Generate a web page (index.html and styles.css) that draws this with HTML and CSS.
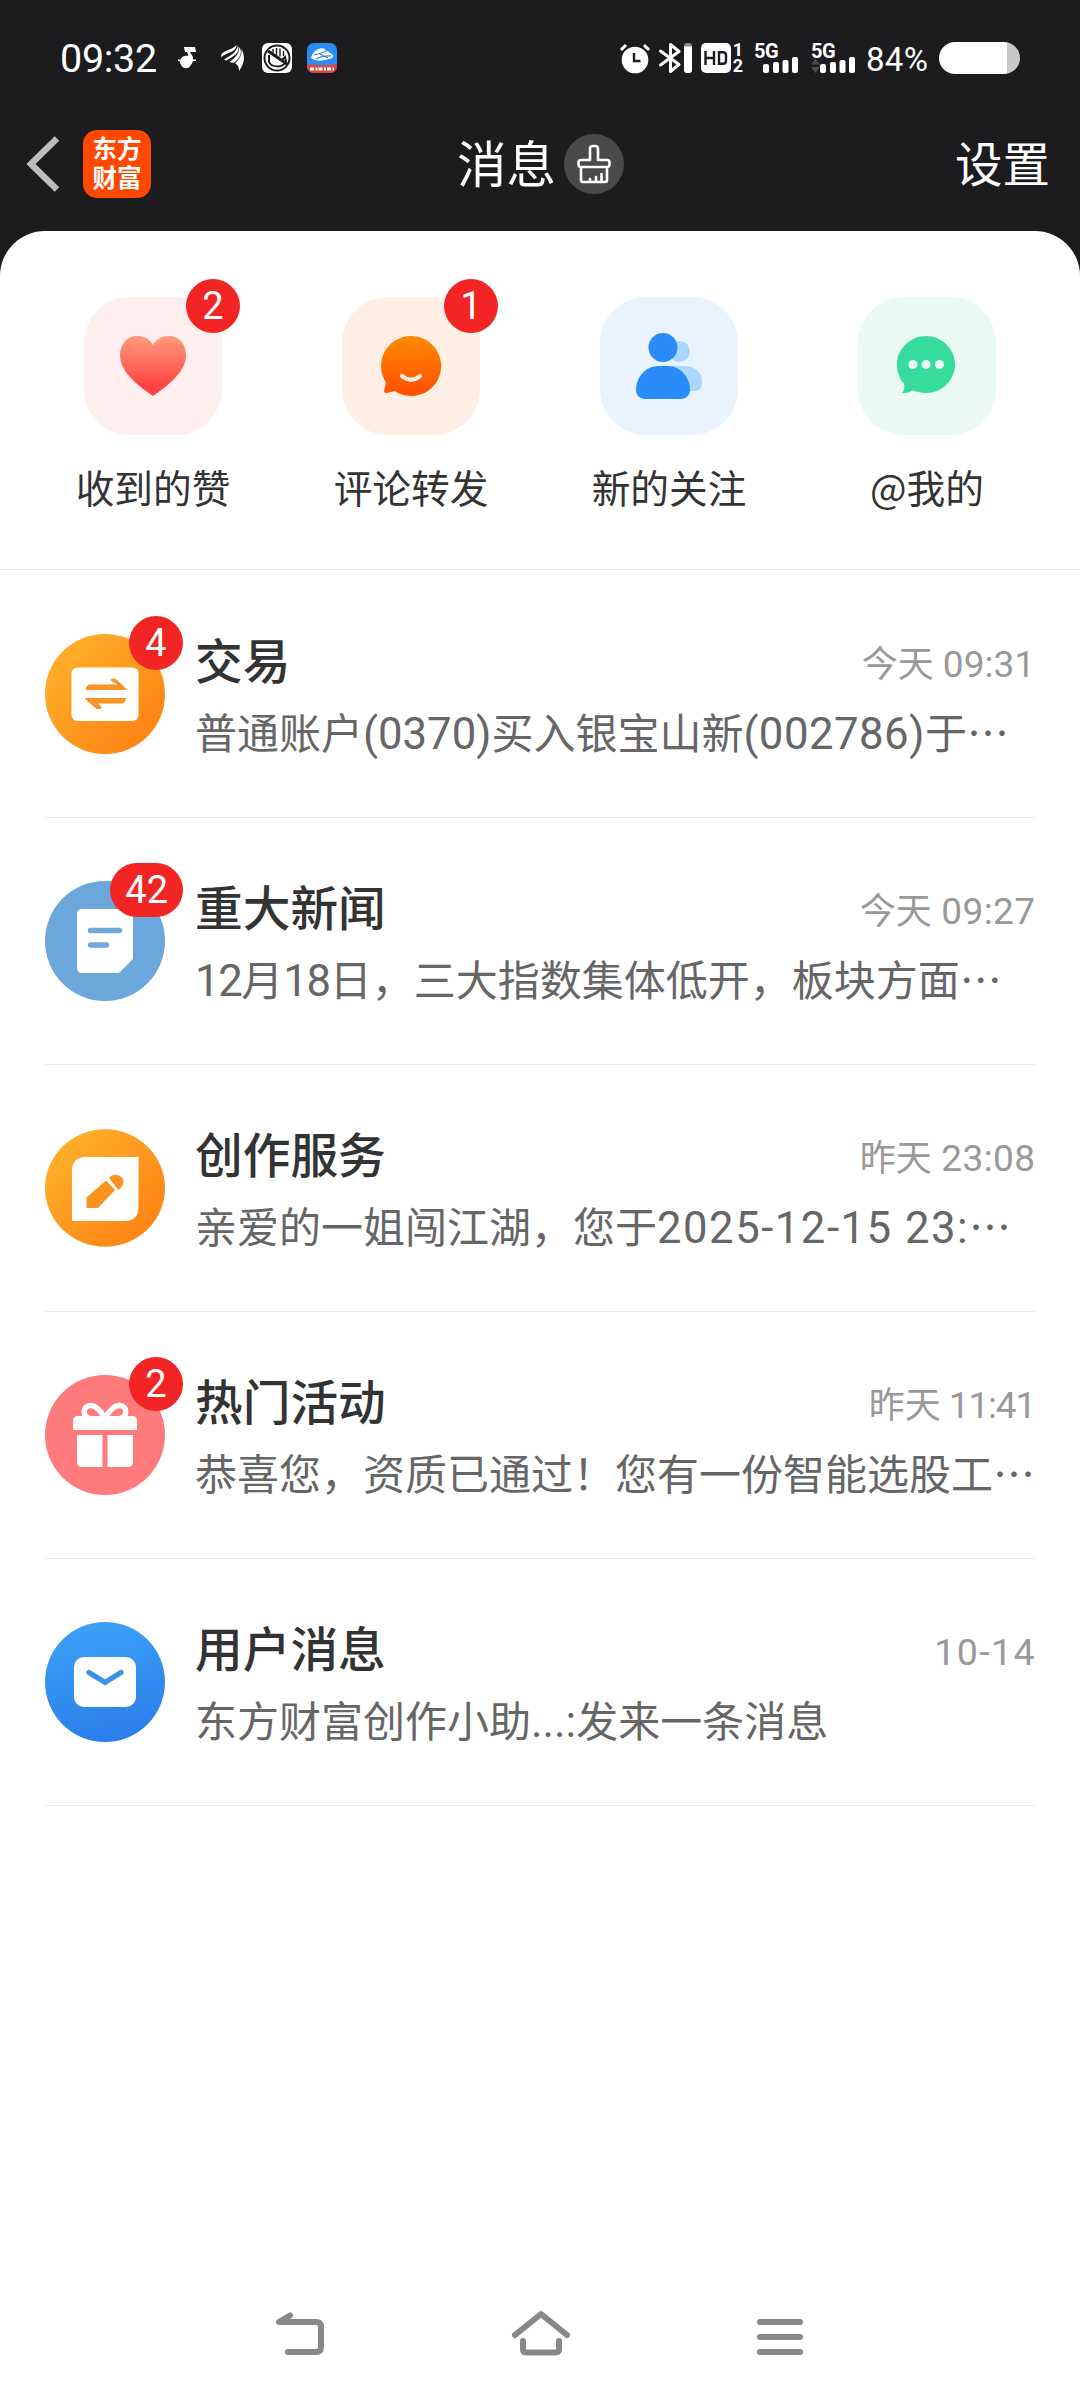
FILE: index.html
```html
<!DOCTYPE html>
<html lang="zh-CN">
<head>
<meta charset="utf-8">
<title>消息</title>
<link rel="stylesheet" href="styles.css">
</head>
<body>
<div class="screen">
  <header class="top">
    <div class="status">
      <span class="clock">09:32</span>
      <svg class="s-note" width="20" height="22" viewBox="0 0 20 22" fill="#fff"><path d="M7 0h11l1 5h-6l3 5v2.500h3v1.500h-3c-.8 3-3 5-4 6.500q-3 1.500-6 0c-1.500-1.500-3-4-3.500-6.500H1v-1.500h2.500c.5-2 2.500-3.500 5-3.800h3L10 5H8z"/></svg>
      <svg class="s-wing" width="23" height="26" viewBox="0 0 23 26" fill="#fff"><path d="M0 11C1 5 10 6 15.500 0c0 7-8 7-15.500 12z"/><path d="M3 14.500C10 10 15 8 17 .5c2.500 7-4 11-12 15z"/><path d="M8.500 17C14 13 18 9 18.500 2c3.500 6 0 12-6 16z"/><path d="M14 18.500C19 14 21 9 20.500 4c4 7 3 15-2.500 22 0-4-1-6-4-7.500z"/></svg>
      <svg class="s-hand" width="30" height="30" viewBox="0 0 30 30"><rect width="30" height="30" rx="6" fill="#fff"/><circle cx="15" cy="15" r="12.500" fill="none" stroke="#1c1c1e" stroke-width="2"/><path d="M7 12v7c2 5 14 7 17-1l-1-4-4 4" fill="none" stroke="#1c1c1e" stroke-width="2"/><path d="M11 6v6M14.500 5v8M18 5.500v8M21.500 8v5" stroke="#1c1c1e" stroke-width="1.400"/><path d="M6 8l19 13" stroke="#1c1c1e" stroke-width="3"/></svg>
      <svg class="s-train" width="30" height="30" viewBox="0 0 30 30"><defs><clipPath id="tc"><rect width="30" height="30" rx="7"/></clipPath></defs><g clip-path="url(#tc)"><path fill="#2a8cf4" d="M0 0h30v30H0z"/><path fill="#e0443a" d="M0 21q15 2.500 30 0v9H0z"/><path d="M4 15q2-9 12-10l10 7q1 3-4 4-12 4-18-1z" fill="#fff"/><path d="M7 12q6-1 14-5M9 16q7-4 16-3M13 11l8 4" stroke="#2a8cf4" stroke-width="1.200" fill="none"/><path d="M3 26h24" stroke="#fff" stroke-width="3" stroke-dasharray="4 1.500 2 1"/></g></svg>
      <span class="spring"></span>
      <svg class="s-alarm" width="30" height="30" viewBox="0 0 30 30"><circle cx="15" cy="17" r="13.300" fill="#fff"/><path d="M1 7l5-5M29 7l-5-5" stroke="#fff" stroke-width="3"/><path d="M14 10v8h6.500" fill="none" stroke="#1c1c1e" stroke-width="2.400"/></svg>
      <svg class="s-bt" width="34" height="30" viewBox="0 0 34 30"><path d="M1.500 8L20 21.500l-8.500 7v-27l8.500 7L1.500 22" fill="none" stroke="#fff" stroke-width="3" stroke-linejoin="round" stroke-linecap="round"/><rect x="25" y="0" width="8" height="30" rx="3" fill="#8a8a8c"/><path d="M25 3.500h8V27q0 3-3 3h-2q-3 0-3-3z" fill="#fff"/></svg>
      <svg class="s-hd" width="30" height="30" viewBox="0 0 30 30"><rect width="30" height="30" rx="5" fill="#fff"/><path d="M4.500 8v14M13 8v14M4.500 15H13M18 9.200h4q3 0 3 3v5.600q0 3-3 3h-4z" fill="none" stroke="#1c1c1e" stroke-width="2.400"/></svg>
      <span class="sims"><span>1</span><span>2</span></span>
      <svg class="s-sig" width="46" height="30" viewBox="0 0 46 30" fill="#fff"><text x="0" y="14.500" class="net">5G</text><rect x="9" y="21" width="6" height="9" rx="2"/><rect x="19" y="19" width="6" height="11" rx="2"/><rect x="28.500" y="17" width="6" height="13" rx="2"/><rect x="38" y="14" width="6" height="16" rx="2"/></svg>
      <svg class="s-sig2" width="46" height="30" viewBox="0 0 46 30" fill="#fff"><text x="0" y="14.500" class="net">5G</text><path d="M0 21.500l4.500-6 4.500 6zM0 24l4.500 6 4.500-6z" fill="#4a4a4c"/><rect x="9" y="21" width="6" height="9" rx="2"/><rect x="19" y="19" width="6" height="11" rx="2"/><rect x="28.500" y="17" width="6" height="13" rx="2"/><rect x="38" y="14" width="6" height="16" rx="2"/></svg>
      <span class="percent">84%</span>
      <span class="battery"></span>
    </div>
    <div class="titlebar">
      <div class="side">
        <svg class="back" width="34" height="56" viewBox="0 0 34 56"><path d="M31 2.500L5 28l26 25.500" fill="none" stroke="#bdbdbd" stroke-width="6.500"/></svg>
        <div class="logo">东方<br>财富</div>
      </div>
      <div class="heading">
        <h1>消息</h1>
        <span class="brush"><svg width="34" height="40" viewBox="0 0 34 40" fill="none" stroke="#fff" stroke-width="2.600" stroke-linejoin="round" stroke-linecap="round"><path d="M13 16V5q0-3 3-3h2q3 0 3 3v11h9q2.500 0 2.500 2.500v2q0 2.500-2.500 2.500H4q-2.500 0-2.500-2.500v-2q0-2.500 2.500-2.500zM4 23v13q0 2 2 2h22q2 0 2-2V23M13 37v-2M19 37v-4M24.500 37v-7"/></svg></span>
      </div>
      <div class="settings">设置</div>
    </div>
  </header>
  <main class="sheet">
    <nav class="shortcuts">
      <div class="cut">
        <div class="tile pink"><svg width="66" height="60" viewBox="0 0 66 60"><defs><linearGradient id="h" x2="0" y2="1"><stop offset="0" stop-color="#ff9c7c"/><stop offset=".85" stop-color="#ff4242"/></linearGradient></defs><path fill="url(#h)" d="M33 9C37 2 43 0 49 0c10 0 17 8 17 19 0 15-14 28-33 41C14 47 0 34 0 19 0 8 7 0 17 0c6 0 12 2 16 9z"/></svg><b class="badge">2</b></div>
        <span>收到的赞</span>
      </div>
      <div class="cut">
        <div class="tile peach"><svg width="60" height="60" viewBox="0 0 60 60"><defs><linearGradient id="c" x2="0" y2="1"><stop offset="0" stop-color="#ff8a00"/><stop offset=".9" stop-color="#ff5400"/></linearGradient></defs><path fill="url(#c)" d="M30 0a30 30 0 1 1-16 55.300L5 57q-2 0-2-2l2-8.500A30 30 0 0 1 30 0z"/><path d="M21 40q9 7.500 18 0" fill="none" stroke="#ffeee4" stroke-width="4.200" stroke-linecap="round"/></svg><b class="badge">1</b></div>
        <span>评论转发</span>
      </div>
      <div class="cut">
        <div class="tile sky"><svg width="66" height="66" viewBox="0 0 66 66"><g fill="#a9d7ff"><circle cx="43.500" cy="18.500" r="10.500"/><path d="M35 33h14q17 2 17 16 0 9-8 9H40z"/></g><circle cx="27" cy="14.500" r="14.500" fill="#2a8cf8"/><path d="M22 33h10c12 0 22 11 22 24 0 5-4 9-9 9H9c-5 0-9-4-9-9 0-13 10-24 22-24z" fill="#2a8cf8"/></svg></div>
        <span>新的关注</span>
      </div>
      <div class="cut">
        <div class="tile mint"><svg width="62" height="60" viewBox="0 0 62 60"><path fill="#36dc9c" d="M30 0c16 0 29 13 29 28.500S46 57 30 57c-5 0-9-1-13-2.800C14 56 10 57.500 6 57c2-2 3-5 2-9.500C3 42 1 35 1 28.500 1 13 14 0 30 0z"/><g fill="#eafaf3"><circle cx="17" cy="28.500" r="4.500"/><circle cx="30" cy="28.500" r="4.500"/><circle cx="43.500" cy="28.500" r="4.500"/></g></svg></div>
        <span>@我的</span>
      </div>
    </nav>
    <section class="list">
      <article class="row">
        <div class="avatar"><svg width="120" height="120" viewBox="0 0 120 120"><defs><linearGradient id="o" x2="1" y2="1"><stop offset=".1" stop-color="#ffb02b"/><stop offset=".9" stop-color="#ff8213"/></linearGradient></defs><circle cx="60" cy="60" r="60" fill="url(#o)"/><rect x="26.500" y="33.500" width="67" height="53.500" rx="6" fill="#fff"/><g fill="#f99422"><path d="M40.500 56q.5-5.500 5-5.500h27L65 46q2-2.500 6-1l10.500 10v1z"/><path d="M81 64q-.5 5.500-5 5.500H53l4 4q-2 2.500-6 1L40 65v-1z"/></g></svg><b class="badge">4</b></div>
        <div class="body"><div class="line"><h2>交易</h2><time>今天<i> 09:31</i></time></div><p>普通账户<i>(0370)</i>买入银宝山新<i class="wide">(002786)</i>于…</p></div>
      </article>
      <article class="row">
        <div class="avatar"><svg width="120" height="120" viewBox="0 0 120 120"><circle cx="60" cy="60" r="60" fill="#6ca7db"/><path d="M37 28h46q5 0 5 5v45L75 91q-1 1-3 1H37q-5 0-5-5V33q0-5 5-5z" fill="#fff"/><path d="M45.500 49.500h29M45.500 64h16" stroke="#73a7d8" stroke-width="5.400" stroke-linecap="round"/></svg><b class="badge">42</b></div>
        <div class="body"><div class="line"><h2>重大新闻</h2><time>今天<i class="late"> 09:27</i></time></div><p><i class="tight">12</i>月<i class="tight">18</i>日，三大指数集体低开，板块方面…</p></div>
      </article>
      <article class="row">
        <div class="avatar"><svg width="120" height="120" viewBox="0 0 120 120"><ellipse cx="60" cy="60" rx="60" ry="58.700" fill="url(#o)"/><path d="M41 29h52.500v50q0 14-14 14H27V43q0-14 14-14z" fill="#fff"/><g fill="#fb921f"><path d="M41.500 80V69.500L61 52.500l9 9.500-17 18z"/><path d="M64 50c5-6 14-3 14.500 4 0 3-2 5-5 8z"/></g></svg></div>
        <div class="body"><div class="line"><h2>创作服务</h2><time>昨天<i class="late"> 23:08</i></time></div><p>亲爱的一姐闯江湖，您于<i class="date">2025-12-15 23:</i>…</p></div>
      </article>
      <article class="row">
        <div class="avatar"><svg width="120" height="120" viewBox="0 0 120 120"><circle cx="60" cy="60" r="60" fill="#ff7b7b"/><g fill="none" stroke="#fff" stroke-width="5.500"><path d="M60 43C54 33 49 30 45 30.500c-8 1-7.500 11 0 13M60 43c6-10 11-13 15-12.500 8 1 7.500 11 0 13"/></g><path d="M33 41h54q5 0 5 5v9H28v-9q0-5 5-5zM32 60h25.500v32H37q-5 0-5-5zM62.500 60H88v27q0 5-5 5H62.500z" fill="#fff"/></svg><b class="badge">2</b></div>
        <div class="body"><div class="line"><h2>热门活动</h2><time>昨天<i class="ones"> 11:41</i></time></div><p>恭喜您，资质已通过！您有一份智能选股工…</p></div>
      </article>
      <article class="row">
        <div class="avatar"><svg width="120" height="120" viewBox="0 0 120 120"><defs><linearGradient id="b" x2=".2" y2="1"><stop offset="0" stop-color="#3ca3f6"/><stop offset="1" stop-color="#2b80eb"/></linearGradient></defs><circle cx="60" cy="60" r="60" fill="url(#b)"/><rect x="29" y="35" width="62" height="50" rx="10" fill="#fff"/><path d="M44 50.500L60 60.500l16-10" fill="none" stroke="#3a92ec" stroke-width="5.200" stroke-linecap="round"/></svg></div>
        <div class="body"><div class="line"><h2>用户消息</h2><time><i class="day">10-14</i></time></div><p>东方财富创作小助<i>...:</i>发来一条消息</p></div>
      </article>
    </section>
  </main>
  <footer class="keys">
    <svg width="50" height="44" viewBox="0 0 50 44"><path d="M15 4.500L4 11h37q5 0 5 5v20q0 5-5 5H13" /></svg>
    <svg width="60" height="44" viewBox="0 0 60 44"><path d="M4 24L30 3l26 21M12 30v8q0 3.500 3.500 3.500h29Q48 41.500 48 38v-8"/></svg>
    <svg width="46" height="44" viewBox="0 0 46 44"><path d="M3 11h40M3 26h40M3 41h40"/></svg>
  </footer>
</div>
</body>
</html>
```
FILE: styles.css
```css
* { box-sizing: border-box; }
body { margin: 0; background: #fff; font-family: "Noto Sans CJK SC", sans-serif; }
h1, h2, p { margin: 0; font-weight: 400; }
i { font-style: normal; font-family: Roboto, sans-serif; white-space: pre; }
svg { display: block; flex: none; overflow: visible; }
.screen { width: 1080px; height: 2400px; display: flex; flex-direction: column; background: #1c1c1e; color: #333; }

.top { height: 231px; color: #fff; }
.status { display: flex; align-items: center; height: 116px; padding: 0 60px; font-family: Roboto, sans-serif; }
.clock { width: 117px; font-size: 39.5px; letter-spacing: -0.3px; }
.s-wing { margin-left: 24px; }
.s-hand { margin-left: 18px; }
.s-train { margin-left: 15px; }
.spring { flex: 1; }
.s-bt { margin-left: 9px; }
.s-hd { margin-left: 8px; }
.sims { display: flex; flex-direction: column; align-items: center; width: 12px; margin-left: 1px; font-size: 18px; line-height: 16px; font-weight: 700; }
.s-sig { margin-left: 10px; }
.s-sig2 { margin-left: 11px; }
.net { font: 700 20px Roboto, sans-serif; letter-spacing: -0.5px; }
.percent { margin-left: 9px; width: 73px; font-size: 33px; line-height: 40px; padding-top: 3px; letter-spacing: 0.3px; }
.battery { width: 81px; height: 32px; border-radius: 16px; background: linear-gradient(90deg, #fff 68px, #c8c8c8 68px); }

.titlebar { display: grid; grid-template-columns: 1fr auto 1fr; align-items: center; height: 96px; padding: 0 30px 0 26px; }
.side { display: flex; align-items: center; gap: 23px; }
.logo { width: 68px; height: 68px; border-radius: 14px; background: #ff4800; text-align: center; font-size: 24.5px; line-height: 29px; font-weight: 700; padding-top: 3px; }
.heading { display: flex; align-items: center; gap: 8px; padding-left: 5px; }
.heading h1 { font-size: 49.5px; line-height: 60px; padding-bottom: 4px; }
.brush { width: 60px; height: 60px; margin-bottom: 1px; border-radius: 50%; background: #4a4a4c; display: flex; align-items: center; justify-content: center; }
.settings { justify-self: end; font-size: 47.5px; line-height: 60px; padding-bottom: 4px; }

.sheet { flex: 1; background: #fff; border-radius: 45px 45px 0 0; }
.shortcuts { display: grid; grid-template-columns: repeat(4, 1fr); height: 339px; padding: 66px 24px 0; border-bottom: 1px solid #e9e9e9; }
.cut { display: flex; flex-direction: column; align-items: center; font-size: 38.7px; line-height: 56px; gap: 23px; }
.tile { position: relative; width: 138px; height: 138px; border-radius: 46px; display: flex; align-items: center; justify-content: center; }
.pink { background: #ffeeee; }
.peach { background: #ffeee4; }
.sky { background: #e8f3fe; }
.mint { background: #e9faf3; }
.badge { position: absolute; top: -18px; right: -18px; min-width: 54px; height: 54px; padding: 0 15px; border-radius: 27px; background: #f22424; color: #fff; font: 400 38px/55px Roboto, sans-serif; text-align: center; }

.list { padding: 1px 45px 0; }
.row { display: flex; gap: 30px; height: 247px; border-bottom: 1px solid #e9e9e9; }
.avatar { position: relative; margin-top: 63px; width: 120px; height: 120px; }
.body { flex: 1; min-width: 0; padding-top: 54px; }
.line { display: flex; justify-content: space-between; height: 76px; }
.line h2 { font-size: 47.7px; line-height: 68px; font-weight: 500; }
time { color: #999; font-size: 36px; line-height: 68px; padding-top: 2px; white-space: nowrap; }
time i { font-size: 37px; }
.line .late { letter-spacing: 0.4px; margin-right: -0.4px; }
.line .ones { letter-spacing: -1.2px; }
.line .day { font-size: 37.5px; letter-spacing: 1.4px; margin-right: -1px; }
.body p { color: #666; font-size: 42px; line-height: 60px; white-space: nowrap; }
.body p i { font-size: 43.7px; }
.body p .wide { letter-spacing: 0.5px; }
.body p .tight { letter-spacing: -1.4px; }
.body p .date { letter-spacing: 1.5px; }

.keys { display: flex; align-items: center; justify-content: space-between; height: 132px; padding: 0 277px 3px 275px; background: #fff; }
.keys path { fill: none; stroke: #888; stroke-width: 6; stroke-linecap: round; stroke-linejoin: round; }
```
